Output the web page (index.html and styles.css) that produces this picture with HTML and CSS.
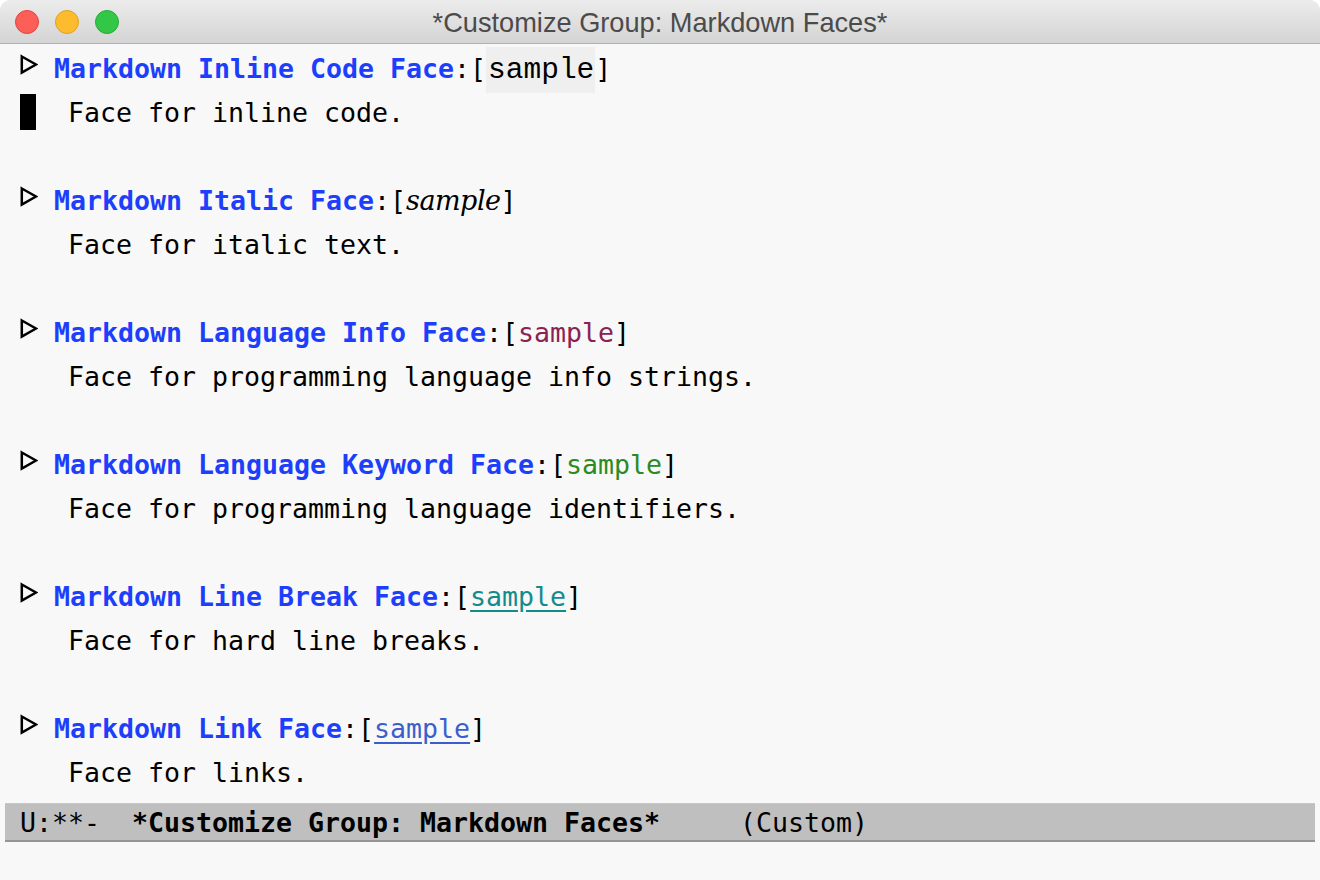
FILE: index.html
```html
<!DOCTYPE html>
<html>
<head>
<meta charset="utf-8">
<title>Customize Group: Markdown Faces</title>
<link rel="stylesheet" href="styles.css">
</head>
<body>
<div class="window">
  <div class="titlebar">
    <div class="lights">
      <span class="light red"></span>
      <span class="light yellow"></span>
      <span class="light green"></span>
    </div>
    <div class="title">*Customize Group: Markdown Faces*</div>
  </div>
  <div class="buffer">
    <div class="row"><svg class="tri" viewBox="0 0 18 44" width="18" height="44"><polygon points="1.8,12.5 16,20.5 1.8,28.5" fill="none" stroke="#000" stroke-width="2.5"/></svg> <span class="tag">Markdown Inline Code Face</span>:[<span class="s-code">sample</span>]</div>
    <div class="row"><span class="cursor"></span>  Face for inline code.</div>
    <div class="row"></div>
    <div class="row"><svg class="tri" viewBox="0 0 18 44" width="18" height="44"><polygon points="1.8,12.5 16,20.5 1.8,28.5" fill="none" stroke="#000" stroke-width="2.5"/></svg> <span class="tag">Markdown Italic Face</span>:[<span class="s-italic">sample</span>]</div>
    <div class="row">   Face for italic text.</div>
    <div class="row"></div>
    <div class="row"><svg class="tri" viewBox="0 0 18 44" width="18" height="44"><polygon points="1.8,12.5 16,20.5 1.8,28.5" fill="none" stroke="#000" stroke-width="2.5"/></svg> <span class="tag">Markdown Language Info Face</span>:[<span class="s-info">sample</span>]</div>
    <div class="row">   Face for programming language info strings.</div>
    <div class="row"></div>
    <div class="row"><svg class="tri" viewBox="0 0 18 44" width="18" height="44"><polygon points="1.8,12.5 16,20.5 1.8,28.5" fill="none" stroke="#000" stroke-width="2.5"/></svg> <span class="tag">Markdown Language Keyword Face</span>:[<span class="s-keyword">sample</span>]</div>
    <div class="row">   Face for programming language identifiers.</div>
    <div class="row"></div>
    <div class="row"><svg class="tri" viewBox="0 0 18 44" width="18" height="44"><polygon points="1.8,12.5 16,20.5 1.8,28.5" fill="none" stroke="#000" stroke-width="2.5"/></svg> <span class="tag">Markdown Line Break Face</span>:[<span class="s-break">sample</span>]</div>
    <div class="row">   Face for hard line breaks.</div>
    <div class="row"></div>
    <div class="row"><svg class="tri" viewBox="0 0 18 44" width="18" height="44"><polygon points="1.8,12.5 16,20.5 1.8,28.5" fill="none" stroke="#000" stroke-width="2.5"/></svg> <span class="tag">Markdown Link Face</span>:[<span class="s-link">sample</span>]</div>
    <div class="row">   Face for links.</div>
  </div>
  <div class="modeline">U:**-  <b>*Customize Group: Markdown Faces*</b>     (Custom)</div>
  <div class="echo"></div>
</div>
</body>
</html>
```

FILE: styles.css
```css
html, body {
  margin: 0;
  padding: 0;
  background: #ffffff;
}

.window {
  width: 1320px;
  height: 880px;
  background: #f8f8f8;
  border-radius: 10px 10px 0 0;
  overflow: hidden;
  display: flex;
  flex-direction: column;
}

.titlebar {
  height: 43px;
  flex: none;
  background: linear-gradient(#ececec, #d4d4d4);
  border-bottom: 1px solid #b1b1b1;
  position: relative;
  display: flex;
  align-items: center;
  justify-content: center;
}

.lights {
  position: absolute;
  left: 15px;
  top: 10px;
  display: flex;
  gap: 16px;
}

.light {
  width: 24px;
  height: 24px;
  border-radius: 50%;
  box-sizing: border-box;
}

.red { background: #fc5f57; border: 1px solid #e0443e; }
.yellow { background: #fdbc2e; border: 1px solid #dea123; }
.green { background: #33c748; border: 1px solid #27aa35; }

.title {
  font-family: "Liberation Sans", Arial, sans-serif;
  font-size: 27.2px;
  color: #4b4b4b;
  padding-top: 3px;
}

.buffer {
  height: 759px;
  flex: none;
  padding: 3px 0 0 20px;
  box-sizing: border-box;
  font-family: "DejaVu Sans Mono", monospace;
  font-size: 26.58px;
  color: #000;
}

.row {
  height: 44px;
  line-height: 44px;
  white-space: pre;
}

.tri {
  display: inline-block;
  vertical-align: top;
  margin-top: -3px;
}

.tag {
  font-weight: bold;
  color: #1d3ffb;
}

.cursor {
  display: inline-block;
  width: 16px;
  height: 36px;
  background: #000;
  vertical-align: top;
  margin-top: 3px;
}

.s-code {
  display: inline-block;
  vertical-align: top;
  height: 46px;
  line-height: 46px;
  margin-top: 0;
  padding: 0 1px 0 2px;
  background: #efefef;
  font-family: "Liberation Mono", "Courier New", monospace;
  font-size: 29.5px;
}

.s-italic {
  font-family: "DejaVu Serif", serif;
  font-style: italic;
  font-size: 27px;
  letter-spacing: -0.5px;
}

.s-info { color: #8b2252; }
.s-keyword { color: #2a8b22; }
.s-break { color: #138b8b; text-decoration: underline; text-underline-offset: 4px; }
.s-link { color: #3a5fcd; text-decoration: underline; text-underline-offset: 4px; }

.modeline {
  flex: none;
  margin: 0 5px;
  height: 35px;
  line-height: 35px;
  padding: 1px 0 0 15px;
  background: #bfbfbf;
  border-top: 1px solid #c8c8c8;
  border-bottom: 2px solid #959595;
  font-family: "DejaVu Sans Mono", monospace;
  font-size: 26.58px;
  color: #000;
  white-space: pre;
}

.echo {
  flex: 1;
}
```
